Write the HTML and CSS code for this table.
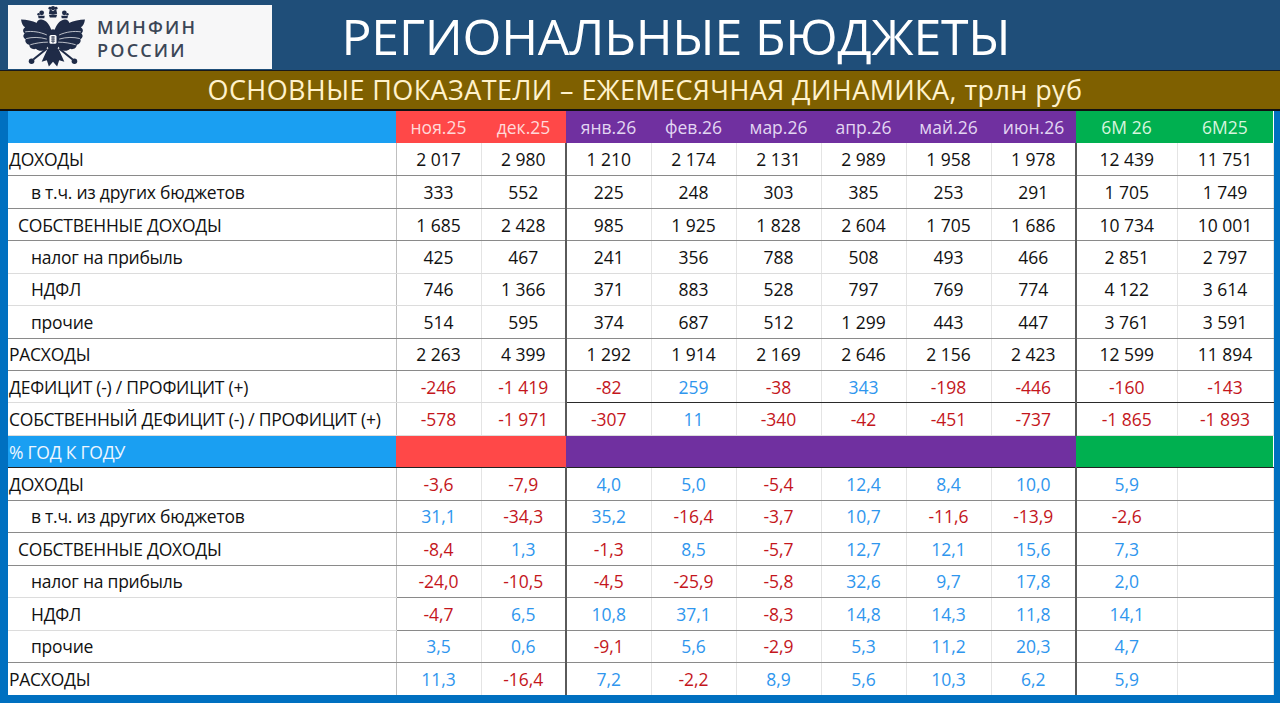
FILE: index.html
```html
<!DOCTYPE html>
<html lang="ru">
<head>
<meta charset="utf-8">
<title>Региональные бюджеты</title>
<link rel="stylesheet" href="styles.css">
</head>
<body>
<div class="page">
  <header class="header">
    <div class="logo">
      <svg class="eagle" viewBox="0 0 64 62" width="66" height="64">
        <g fill="#1f2b47">
          <g id="half">
            <path d="M28 8.5 L29 3.5 L32 6 L32 9.5 Z"/>
            <circle cx="29" cy="3" r="1.4"/>
            <circle cx="21" cy="7.5" r="2.3"/>
            <circle cx="18" cy="9" r="1.2"/>
            <path d="M17.5 10.5 L24 10.5 L23.5 12.8 L18 12.8 Z"/>
            <path d="M31 26 C29 19 25.5 14.5 21 14 C18 13.8 16 15.8 16.3 18 C16.5 19.6 18 20.2 19.3 19.8 L15.5 22.5 L21 21.8 C24.5 21.5 27.5 25 29 28.5 Z"/>
            <path d="M29.5 26 C22 19 12 14 1 14 C1.5 18 3 20.5 5 21.5 C2.5 23 2.5 26 4.5 27.5 C2.5 29 3 32 5.5 33 C4.5 35.5 6 38 9 38.5 C9 41.5 12 43.5 15.5 42.5 C18 45 22 45 24.5 43 L30 37 Z"/>
            <path d="M27 42 L21 55 L26 53.5 L28 59.5 L32 55 L32 42 Z"/>
            <path d="M26.5 43 L13.5 53.5 L12.3 52 L25.5 41.5 Z"/>
            <circle cx="11.2" cy="54.5" r="2.7"/>
          </g>
          <use href="#half" transform="matrix(-1 0 0 1 64 0)"/>
          <path d="M28 9.5 L36 9.5 L35 12 L29 12 Z"/>
          <circle cx="32" cy="3" r="2.1"/>
          <ellipse cx="32" cy="34" rx="6.8" ry="10.5"/>
          <rect x="28.6" y="29" width="6.8" height="8.5" rx="1.5" fill="#ffffff"/>
          <path d="M30 31 L34 31 M30 33 L34 33 M30 35 L34 35 M32 30 L32 37" stroke="#1f2b47" stroke-width="0.8"/>
          <path d="M26 29 C19 26 12 25 5 26 M26 33 C19 31 12 31 6 32.5 M27 36 C21 36 15 37 10 38.5 M38 29 C45 26 52 25 59 26 M38 33 C45 31 52 31 58 32.5 M37 36 C43 36 49 37 54 38.5" stroke="#f7f7f8" stroke-width="0.7" fill="none"/>
        </g>
      </svg>
      <div class="logo-text">
        <span>МИНФИН</span>
        <span>РОССИИ</span>
      </div>
    </div>
    <h1 class="title">РЕГИОНАЛЬНЫЕ БЮДЖЕТЫ</h1>
  </header>
  <div class="subtitle">ОСНОВНЫЕ ПОКАЗАТЕЛИ – ЕЖЕМЕСЯЧНАЯ ДИНАМИКА, трлн руб</div>
  <div class="frame">
    <table class="grid">
      <colgroup>
        <col class="w-label">
        <col class="w-m"><col class="w-m"><col class="w-m"><col class="w-m">
        <col class="w-m"><col class="w-m"><col class="w-m"><col class="w-m">
        <col class="w-6a"><col class="w-6b">
      </colgroup>
      <tr class="head">
        <td class="lab sky"></td>
        <td class="red">ноя.25</td><td class="red sep">дек.25</td>
        <td class="pur">янв.26</td><td class="pur">фев.26</td><td class="pur">мар.26</td><td class="pur">апр.26</td><td class="pur">май.26</td><td class="pur sep">июн.26</td>
        <td class="grn">6M 26</td><td class="grn">6M25</td>
      </tr>
      <tr class="dk">
        <td class="lab">ДОХОДЫ</td>
        <td>2&nbsp;017</td><td class="sep">2&nbsp;980</td><td>1&nbsp;210</td><td>2&nbsp;174</td><td>2&nbsp;131</td><td>2&nbsp;989</td><td>1&nbsp;958</td><td class="sep">1&nbsp;978</td><td>12&nbsp;439</td><td>11&nbsp;751</td>
      </tr>
      <tr class="dk">
        <td class="lab sub">в т.ч. из других бюджетов</td>
        <td>333</td><td class="sep">552</td><td>225</td><td>248</td><td>303</td><td>385</td><td>253</td><td class="sep">291</td><td>1&nbsp;705</td><td>1&nbsp;749</td>
      </tr>
      <tr class="dk">
        <td class="lab mid">СОБСТВЕННЫЕ ДОХОДЫ</td>
        <td>1&nbsp;685</td><td class="sep">2&nbsp;428</td><td>985</td><td>1&nbsp;925</td><td>1&nbsp;828</td><td>2&nbsp;604</td><td>1&nbsp;705</td><td class="sep">1&nbsp;686</td><td>10&nbsp;734</td><td>10&nbsp;001</td>
      </tr>
      <tr>
        <td class="lab sub">налог на прибыль</td>
        <td>425</td><td class="sep">467</td><td>241</td><td>356</td><td>788</td><td>508</td><td>493</td><td class="sep">466</td><td>2&nbsp;851</td><td>2&nbsp;797</td>
      </tr>
      <tr>
        <td class="lab sub">НДФЛ</td>
        <td>746</td><td class="sep">1&nbsp;366</td><td>371</td><td>883</td><td>528</td><td>797</td><td>769</td><td class="sep">774</td><td>4&nbsp;122</td><td>3&nbsp;614</td>
      </tr>
      <tr class="dk">
        <td class="lab sub">прочие</td>
        <td>514</td><td class="sep">595</td><td>374</td><td>687</td><td>512</td><td>1&nbsp;299</td><td>443</td><td class="sep">447</td><td>3&nbsp;761</td><td>3&nbsp;591</td>
      </tr>
      <tr class="dk">
        <td class="lab">РАСХОДЫ</td>
        <td>2&nbsp;263</td><td class="sep">4&nbsp;399</td><td>1&nbsp;292</td><td>1&nbsp;914</td><td>2&nbsp;169</td><td>2&nbsp;646</td><td>2&nbsp;156</td><td class="sep">2&nbsp;423</td><td>12&nbsp;599</td><td>11&nbsp;894</td>
      </tr>
      <tr class="split">
        <td class="lab">ДЕФИЦИТ (-) / ПРОФИЦИТ (+)</td>
        <td class="neg lt">-246</td><td class="neg lt sep">-1&nbsp;419</td><td class="neg">-82</td><td class="pos">259</td><td class="neg">-38</td><td class="pos">343</td><td class="neg">-198</td><td class="neg sep">-446</td><td class="neg">-160</td><td class="neg">-143</td>
      </tr>
      <tr>
        <td class="lab">СОБСТВЕННЫЙ ДЕФИЦИТ (-) / ПРОФИЦИТ (+)</td>
        <td class="neg">-578</td><td class="neg sep">-1&nbsp;971</td><td class="neg">-307</td><td class="pos">11</td><td class="neg">-340</td><td class="neg">-42</td><td class="neg">-451</td><td class="neg sep">-737</td><td class="neg">-1&nbsp;865</td><td class="neg">-1&nbsp;893</td>
      </tr>
      <tr class="section">
        <td class="lab sky">% ГОД К ГОДУ</td>
        <td class="red"></td><td class="red"></td>
        <td class="pur"></td><td class="pur"></td><td class="pur"></td><td class="pur"></td><td class="pur"></td><td class="pur"></td>
        <td class="grn"></td><td class="grn"></td>
      </tr>
      <tr class="dk">
        <td class="lab">ДОХОДЫ</td>
        <td class="neg">-3,6</td><td class="neg sep">-7,9</td><td class="pos">4,0</td><td class="pos">5,0</td><td class="neg">-5,4</td><td class="pos">12,4</td><td class="pos">8,4</td><td class="pos sep">10,0</td><td class="pos">5,9</td><td></td>
      </tr>
      <tr class="dk">
        <td class="lab sub">в т.ч. из других бюджетов</td>
        <td class="pos">31,1</td><td class="neg sep">-34,3</td><td class="pos">35,2</td><td class="neg">-16,4</td><td class="neg">-3,7</td><td class="pos">10,7</td><td class="neg">-11,6</td><td class="neg sep">-13,9</td><td class="neg">-2,6</td><td></td>
      </tr>
      <tr class="dk">
        <td class="lab mid">СОБСТВЕННЫЕ ДОХОДЫ</td>
        <td class="neg">-8,4</td><td class="pos sep">1,3</td><td class="neg">-1,3</td><td class="pos">8,5</td><td class="neg">-5,7</td><td class="pos">12,7</td><td class="pos">12,1</td><td class="pos sep">15,6</td><td class="pos">7,3</td><td></td>
      </tr>
      <tr class="dk">
        <td class="lab sub lt">налог на прибыль</td>
        <td class="neg">-24,0</td><td class="neg sep">-10,5</td><td class="neg">-4,5</td><td class="neg">-25,9</td><td class="neg">-5,8</td><td class="pos">32,6</td><td class="pos">9,7</td><td class="pos sep">17,8</td><td class="pos">2,0</td><td></td>
      </tr>
      <tr class="dk">
        <td class="lab sub lt">НДФЛ</td>
        <td class="neg">-4,7</td><td class="pos sep">6,5</td><td class="pos">10,8</td><td class="pos">37,1</td><td class="neg">-8,3</td><td class="pos">14,8</td><td class="pos">14,3</td><td class="pos sep">11,8</td><td class="pos">14,1</td><td></td>
      </tr>
      <tr class="dk">
        <td class="lab sub">прочие</td>
        <td class="pos">3,5</td><td class="pos sep">0,6</td><td class="neg">-9,1</td><td class="pos">5,6</td><td class="neg">-2,9</td><td class="pos">5,3</td><td class="pos">11,2</td><td class="pos sep">20,3</td><td class="pos">4,7</td><td></td>
      </tr>
      <tr class="last">
        <td class="lab">РАСХОДЫ</td>
        <td class="pos">11,3</td><td class="neg sep">-16,4</td><td class="pos">7,2</td><td class="neg">-2,2</td><td class="pos">8,9</td><td class="pos">5,6</td><td class="pos">10,3</td><td class="pos sep">6,2</td><td class="pos">5,9</td><td></td>
      </tr>
    </table>
  </div>
</div>
</body>
</html>
```
FILE: styles.css
```css
* { box-sizing: border-box; }
html, body { margin: 0; padding: 0; }
body {
  width: 1280px;
  height: 703px;
  overflow: hidden;
  font-family: "Open Sans", "Noto Sans", "DejaVu Sans", sans-serif;
  background: #0070c0;
}
.page {
  width: 1280px;
  height: 703px;
  display: flex;
  flex-direction: column;
}
.header {
  height: 70px;
  background: #1f4e79;
  display: flex;
  align-items: flex-end;
  padding-left: 8px;
  padding-bottom: 1px;
}
.logo {
  width: 264px;
  height: 64px;
  background: #f7f7f8;
  display: flex;
  align-items: center;
  gap: 11px;
  padding-left: 12px;
}
.eagle { display: block; flex: none; }
.logo-text {
  display: flex;
  flex-direction: column;
  color: #3b4656;
  font-size: 18px;
  line-height: 23px;
  letter-spacing: 2.2px;
  font-weight: 600;
  padding-top: 3px;
}
.title {
  flex: 1;
  align-self: stretch;
  margin: 0;
  text-align: center;
  padding-right: 200px;
  color: #ffffff;
  font-size: 50px;
  font-weight: 400;
  line-height: 72px;
  letter-spacing: -0.2px;
}
.subtitle {
  height: 41px;
  background: #7f6000;
  border-top: 1px solid #1a1a1a;
  border-bottom: 2px solid #111111;
  color: #fff2cc;
  font-size: 27px;
  line-height: 38px;
  text-align: center;
  padding-left: 10px;
  letter-spacing: 0.4px;
}
.frame {
  flex: 1;
  padding: 0 7px 8px 8px;
  background: #0070c0;
}
.grid {
  width: 1265px;
  table-layout: fixed;
  border-collapse: collapse;
  background: #ffffff;
  font-size: 17.5px;
  color: #111111;
}
.w-label { width: 388px; }
.w-m { width: 85px; }
.w-6a { width: 101px; }
.w-6b { width: 96px; }
.grid tr { height: 32.45px; }
.grid td {
  padding: 0;
  text-align: center;
  white-space: nowrap;
  border-bottom: 1px solid #dcdcdc;
  border-right: 1px solid #e4e4e4;
  line-height: 20px;
}
.grid td.lab {
  text-align: left;
  padding-left: 1px;
  letter-spacing: -0.25px;
  border-right: 1px solid #bfbfbf;
}
.grid td.mid { padding-left: 10px; }
.grid td.sub { padding-left: 23px; }
.grid tr.dk td { border-bottom-color: #8a8a8a; }
.grid tr.split td { border-bottom-color: #2a2a2a; }
.grid tr.split td.lab,
.grid tr.split td.lt { border-bottom-color: #dcdcdc; }
.grid tr.dk td.lt { border-bottom-color: #dcdcdc; }
.grid td.sep { border-right: 2px solid #5a5a5a; }
.grid tr.last td { border-bottom: none; }
.grid tr.head td { border: none; }
.grid tr.section td { border-right: none; border-bottom: 1px solid #222222; }
.grid tr.section td.lab { border-right: none; }
.sky { background: #1a9ff2; }
.red { background: #ff4848; }
.pur { background: #7030a0; }
.grn { background: #00b050; }
.head .red { color: #ffd9d9; }
.head .pur { color: #e2d6f2; }
.head .grn { color: #d6f5de; }
.section .sky { color: #eef6ff; }
.neg { color: #c4161c; }
.pos { color: #2f96ee; }
```
